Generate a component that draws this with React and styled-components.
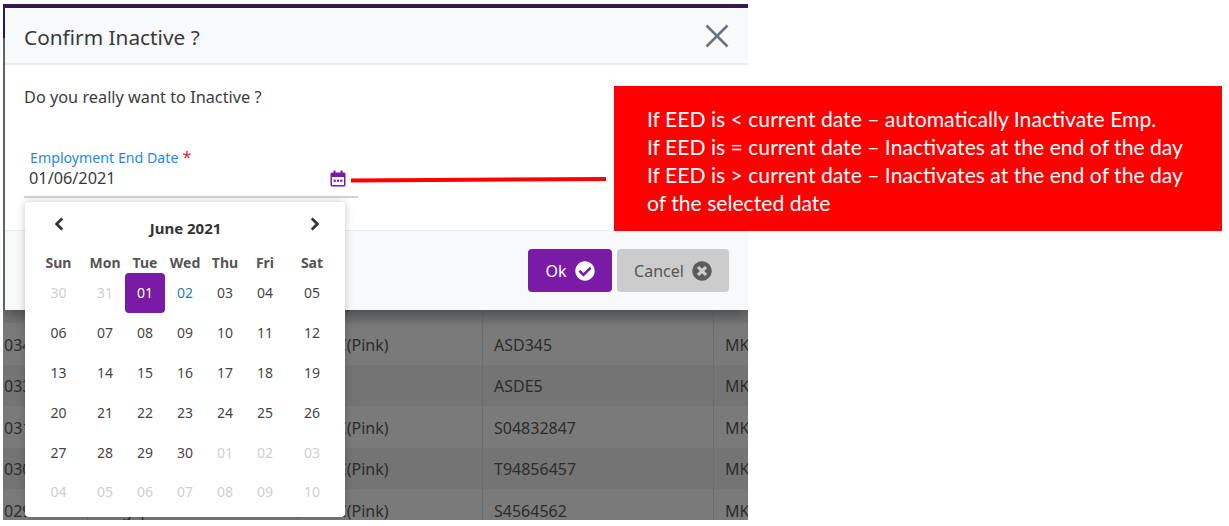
// App.jsx
import React from 'react';
import styled, { createGlobalStyle } from 'styled-components';
import { FaCheckCircle, FaTimesCircle, FaChevronLeft, FaChevronRight } from 'react-icons/fa';

const GlobalStyle = createGlobalStyle`
  html, body {
    margin: 0;
    background: #fff;
  }
  body {
    font-family: "Noto Sans", "Open Sans", sans-serif;
  }
`;

const Page = styled.div`
  position: relative;
  width: 1229px;
  height: 526px;
  padding: 4px 0 0 3px;
  box-sizing: border-box;
  overflow: hidden;
`;

const Screen = styled.div`
  position: relative;
  width: 745px;
  height: 516px;
  overflow: hidden;
  background: #777;
`;

const TopBar = styled.div`
  height: 34px;
  background: #3b1a53;
`;

const TableArea = styled.div`
  padding-top: 243.5px;
  color: #2c2c2c;
  font-size: 16px;
`;

const TableRow = styled.div`
  display: grid;
  grid-template-columns: 85px 210px 185px 231px 60px;
  height: 41.5px;
  background: ${(p) => (p.$odd ? '#747474' : '#7a7a7a')};
`;

const Cell = styled.div`
  display: flex;
  align-items: center;
  padding: 2px 0 0 ${(p) => p.$pad || 11}px;
  border-right: 1px solid #6c6c6c;
  white-space: nowrap;
  overflow: hidden;
`;

const Dialog = styled.div`
  position: absolute;
  left: 2px;
  top: 4px;
  width: 743px;
  height: 302px;
  display: flex;
  flex-direction: column;
  background: #fff;
  box-shadow: 0 4px 14px rgba(0, 0, 0, 0.4);
`;

const DialogHeader = styled.div`
  height: 57px;
  flex: none;
  display: flex;
  align-items: center;
  justify-content: space-between;
  padding: 2px 19px 0 19px;
  box-sizing: border-box;
  background: #f8f9fa;
  border-bottom: 2px solid #ebedef;
`;

const Title = styled.div`
  font-size: 20.8px;
  color: #3a3a3a;
`;

const CloseIcon = styled.svg`
  width: 24px;
  height: 24px;
  margin-top: -2px;
  display: block;
`;

const DialogBody = styled.div`
  flex: 1;
  padding: 21px 19px 0;
`;

const Question = styled.div`
  font-size: 16.3px;
  line-height: 22px;
  color: #3c3c3c;
`;

const Field = styled.div`
  width: 334px;
  margin-top: 39px;
  border-bottom: 2px solid #d2d2d2;
`;

const FieldLabel = styled.div`
  padding-left: 6px;
  font-size: 14.2px;
  line-height: 20px;
  color: #1e88f0;
`;

const Star = styled.span`
  margin-left: 4px;
  color: #d0213c;
  font-size: 16px;
`;

const FieldInput = styled.div`
  display: flex;
  align-items: center;
  justify-content: space-between;
  height: 28px;
  padding: 0 12px 8px 5px;
  box-sizing: border-box;
  font-size: 16.3px;
  color: #3a3a3a;
`;

const DialogFooter = styled.div`
  height: 80px;
  flex: none;
  display: flex;
  justify-content: flex-end;
  align-items: flex-start;
  gap: 5px;
  padding: 18px 19px 0 0;
  box-sizing: border-box;
  background: #f8f9fa;
  border-top: 1px solid #ebedef;
`;

const ActionButton = styled.button`
  height: 43px;
  width: ${(p) => (p.$primary ? '84px' : '112px')};
  display: flex;
  align-items: center;
  justify-content: center;
  gap: 8px;
  padding: 0;
  border: none;
  border-radius: 4px;
  font-family: inherit;
  font-size: 16px;
  color: ${(p) => (p.$primary ? '#fff' : '#555')};
  background: ${(p) => (p.$primary ? '#7a1ba6' : '#cccccc')};
`;

const CalendarPopup = styled.div`
  position: absolute;
  left: 22px;
  top: 198px;
  width: 320px;
  height: 315px;
  padding: 0 7px;
  box-sizing: border-box;
  background: #fff;
  border-radius: 4px;
  box-shadow: 0 0 8px rgba(0, 0, 0, 0.22);
`;

const CalendarHeader = styled.div`
  height: 50px;
  display: flex;
  align-items: center;
  justify-content: space-between;
  padding: 0 16px 6px 20px;
  box-sizing: border-box;
  color: #333;

  svg {
    stroke: currentColor;
    stroke-width: 30px;
  }
`;

const MonthTitle = styled.div`
  margin-top: 8px;
  margin-left: -3px;
  font-size: 15px;
  font-weight: 700;
  color: #333;
`;

const DayGrid = styled.div`
  display: grid;
  grid-template-columns: 53px repeat(5, 40px) 54px;
  grid-auto-rows: 39.8px;
`;

const WeekHead = styled(DayGrid)`
  grid-auto-rows: 21px;
`;

const WeekDay = styled.div`
  display: flex;
  align-items: center;
  justify-content: center;
  font-size: 14px;
  font-weight: 700;
  color: #555;
`;

const colors = { muted: '#cfcfcf', today: '#2f7ba8', normal: '#454545', selected: '#fff' };

const Day = styled.div`
  display: flex;
  align-items: center;
  justify-content: center;
  font-size: 14px;
  border-radius: 4px;
  color: ${(p) => colors[p.$kind]};
  background: ${(p) => (p.$kind === 'selected' ? '#7a1ba6' : 'transparent')};
`;

const Connector = styled.svg`
  position: absolute;
  left: 350px;
  top: 176px;
  width: 258px;
  height: 8px;
`;

const Callout = styled.div`
  position: absolute;
  left: 614px;
  top: 86px;
  width: 608px;
  height: 145px;
  padding: 19px 20px 0 33px;
  box-sizing: border-box;
  background: #ff0000;
  color: #fff;
  font-family: Lato, "Noto Sans", sans-serif;
  font-size: 21.15px;
  line-height: 28px;
`;

const rows = [
  ['', '', '(Pink)', '', ''],
  ['034', '', 'NRIC(Pink)', 'ASD345', 'MKT'],
  ['033', '', '', 'ASDE5', 'MKT'],
  ['031', '', 'NRIC(Pink)', 'S04832847', 'MKT'],
  ['030', '', 'NRIC(Pink)', 'T94856457', 'MKT'],
  ['029', 'Singapore Citizen', 'NRIC(Pink)', 'S4564562', 'MKT'],
];

const weekDays = ['Sun', 'Mon', 'Tue', 'Wed', 'Thu', 'Fri', 'Sat'];

const days = [
  ['30', 'muted'], ['31', 'muted'], ['01', 'selected'], ['02', 'today'], ['03'], ['04'], ['05'],
  ['06'], ['07'], ['08'], ['09'], ['10'], ['11'], ['12'],
  ['13'], ['14'], ['15'], ['16'], ['17'], ['18'], ['19'],
  ['20'], ['21'], ['22'], ['23'], ['24'], ['25'], ['26'],
  ['27'], ['28'], ['29'], ['30'], ['01', 'muted'], ['02', 'muted'], ['03', 'muted'],
  ['04', 'muted'], ['05', 'muted'], ['06', 'muted'], ['07', 'muted'], ['08', 'muted'], ['09', 'muted'], ['10', 'muted'],
];

const notes = [
  'If EED is < current date – automatically Inactivate Emp.',
  'If EED is = current date – Inactivates at the end of the day',
  'If EED is > current date – Inactivates at the end of the day',
  'of the selected date',
];

// little purple calendar next to the date input
const CalendarIcon = () => (
  <svg width="16" height="17" viewBox="0 0 16 17">
    <path d="M.5 4A1.5 1.5 0 0 1 2 2.500h1.500V.5h2v2h5v-2h2v2H14A1.500 1.500 0 0 1 15.500 4v11a1.500 1.500 0 0 1-1.500 1.500H2A1.500 1.500 0 0 1 .5 15z" fill="#7a1ba6" />
    <rect x="2" y="7" width="12" height="8" fill="#fff" />
    <rect x="3.600" y="9.600" width="2.200" height="2.200" fill="#7a1ba6" />
    <rect x="6.900" y="9.600" width="2.200" height="2.200" fill="#7a1ba6" />
    <rect x="10.200" y="9.600" width="2.200" height="2.200" fill="#7a1ba6" />
  </svg>
);

const App = () => {
  return (
    <Page>
      <GlobalStyle />
      <Screen>
        <TopBar />
        <TableArea>
          {rows.map((row, i) => (
            <TableRow key={i} $odd={i % 2 === 0}>
              <Cell $pad={1}>{row[0]}</Cell>
              <Cell>{row[1]}</Cell>
              <Cell>{row[2]}</Cell>
              <Cell>{row[3]}</Cell>
              <Cell>{row[4]}</Cell>
            </TableRow>
          ))}
        </TableArea>

        <Dialog>
          <DialogHeader>
            <Title>Confirm Inactive ?</Title>
            <CloseIcon viewBox="0 0 24 24">
              <path d="M1.500 1.500l21 21M22.500 1.500l-21 21" stroke="#6c757d" strokeWidth="2.600" fill="none" />
            </CloseIcon>
          </DialogHeader>
          <DialogBody>
            <Question>Do you really want to Inactive ?</Question>
            <Field>
              <FieldLabel>
                Employment End Date<Star>*</Star>
              </FieldLabel>
              <FieldInput>
                01/06/2021
                <CalendarIcon />
              </FieldInput>
            </Field>
          </DialogBody>
          <DialogFooter>
            <ActionButton $primary>
              Ok <FaCheckCircle size={20} />
            </ActionButton>
            <ActionButton>
              Cancel <FaTimesCircle size={20} color="#5c5c5c" />
            </ActionButton>
          </DialogFooter>
        </Dialog>

        <CalendarPopup>
          <CalendarHeader>
            <FaChevronLeft size={14} />
            <MonthTitle>June 2021</MonthTitle>
            <FaChevronRight size={14} />
          </CalendarHeader>
          <WeekHead>
            {weekDays.map((d) => (
              <WeekDay key={d}>{d}</WeekDay>
            ))}
          </WeekHead>
          <DayGrid>
            {days.map(([label, kind], i) => (
              <Day key={i} $kind={kind || 'normal'}>
                {label}
              </Day>
            ))}
          </DayGrid>
        </CalendarPopup>
      </Screen>

      <Connector viewBox="0 0 258 8">
        <line x1="1" y1="4.500" x2="256" y2="3" stroke="#ff0000" strokeWidth="4" />
      </Connector>

      <Callout>
        {notes.map((line) => (
          <div key={line}>{line}</div>
        ))}
      </Callout>
    </Page>
  );
};

export default App;
